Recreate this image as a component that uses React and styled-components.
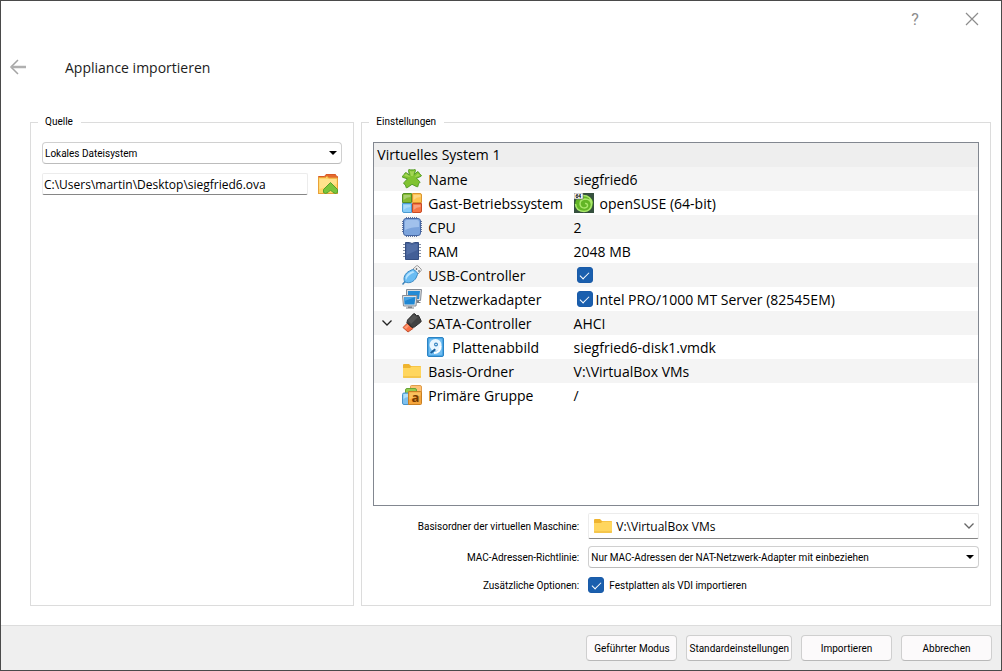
import { useState } from "react";
import styled, { createGlobalStyle } from "styled-components";

const GlobalStyle = createGlobalStyle`
  * {
    box-sizing: border-box;
  }

  body {
    margin: 0;
    background: #4a4a4a;
    color: #000;
    font-family: Roboto, "Open Sans", sans-serif;
    font-size: 10px;
  }

  button,
  input,
  select {
    margin: 0;
    color: inherit;
    font: inherit;
  }
`;

const readingFont = `"Open Sans", "Noto Sans", sans-serif`;

const Dialog = styled.div`
  display: flex;
  flex-direction: column;
  min-height: 100vh;
  border: 1px solid #4a4a4a;
  background: #fff;
`;

const TitleBar = styled.header`
  display: flex;
  justify-content: flex-end;
  gap: 27px;
  height: 38px;
  padding: 4px 14px 4px 0;
`;

const PlainButton = styled.button`
  display: flex;
  align-items: center;
  justify-content: center;
  width: 30px;
  height: 28px;
  padding: 0;
  border: none;
  background: none;
  color: #8c8c8c;
  font-size: 16px;
`;

const PageHead = styled.div`
  display: flex;
  align-items: center;
  gap: 32px;
  height: 56px;
  padding-left: 2px;
`;

const Title = styled.h1`
  margin: 0;
  color: #1c1c1c;
  font-family: ${readingFont};
  font-size: 14px;
  font-weight: 400;
`;

const Content = styled.main`
  display: grid;
  flex: 1;
  grid-template-columns: 34fr 66fr;
  gap: 7px;
  padding: 18px 10px 19px 29px;
`;

const Group = styled.fieldset`
  display: flex;
  flex-direction: column;
  min-width: 0;
  margin: 0;
  padding: 11px 11px 10px;
  border: 1px solid #dcdcdc;
`;

const Legend = styled.legend`
  margin-left: -4px;
  padding: 0 8px 0 7px;
  line-height: 18px;
`;

const FileRow = styled.div`
  display: flex;
  align-items: center;
  gap: 10px;
  margin-top: 9px;
  padding-right: 4px;
`;

const PathInput = styled.input`
  flex: 1;
  min-width: 0;
  height: 22px;
  padding: 0 1px;
  border: 1px solid #ececec;
  border-bottom-color: #868686;
  border-radius: 2px;
  background: #fff;
  outline: none;
  font-family: ${readingFont};
  font-size: 12px;
`;

const IconButton = styled(PlainButton)`
  width: 20px;
  height: 22px;
`;

const ComboBox = styled.div`
  position: relative;
  display: flex;
`;

const Select = styled.select`
  width: 100%;
  height: ${(props) => (props.$flat ? "26px" : "22px")};
  padding: 0 24px 0 ${(props) => (props.$flat ? "27px" : "2px")};
  appearance: none;
  border: 1px solid ${(props) => (props.$flat ? "#ececec" : "#d0d0d0")};
  border-bottom-color: ${(props) => (props.$flat ? "#868686" : "#bcbcbc")};
  border-radius: ${(props) => (props.$flat ? "2px" : "4px")};
  background: #fff;
  outline: none;
  font-family: ${(props) => (props.$flat ? readingFont : "inherit")};
  font-size: ${(props) => (props.$flat ? "12px" : "10px")};
`;

const ComboIcon = styled.span`
  position: absolute;
  top: 0;
  bottom: 0;
  left: 5px;
  display: flex;
  align-items: center;
  pointer-events: none;
`;

const ComboArrow = styled(ComboIcon)`
  right: 5px;
  left: auto;
`;

const TreeFrame = styled.div`
  flex: 1;
  border: 1px solid #828790;
  background: #fff;
`;

const Tree = styled.table`
  width: 100%;
  border-collapse: collapse;
  table-layout: fixed;
  font-family: ${readingFont};
  font-size: 14px;
`;

const NameColumn = styled.col`
  width: 33%;
`;

const TreeRow = styled.tr`
  height: 24px;
  background: ${(props) => (props.$shaded ? "#f4f4f4" : "#fff")};
`;

const SystemHead = styled.th`
  padding: 0 3px;
  background: #eee;
  font-weight: 400;
  line-height: 24px;
  text-align: left;
`;

const NameCell = styled.th`
  padding: 0;
  font-weight: 400;
`;

const ValueCell = styled.td`
  padding: 0;
`;

const CellContent = styled.div`
  display: flex;
  align-items: center;
  gap: 6px;
  height: 24px;
  padding-left: ${(props) => props.$indent || 0}px;
  white-space: nowrap;

  svg {
    flex: none;
  }
`;

const ExpandButton = styled(PlainButton)`
  width: 18px;
  height: 18px;
`;

const CheckLabel = styled.label`
  display: flex;
  align-items: center;
  gap: ${(props) => props.$gap}px;
`;

const CheckBox = styled.input`
  display: flex;
  flex: none;
  align-items: center;
  justify-content: center;
  width: 16px;
  height: 16px;
  appearance: none;
  border: 1px solid ${(props) => (props.checked ? "#1a5ba8" : "#868686")};
  border-radius: 3px;
  background: ${(props) => (props.checked ? "#1a5fae" : "#fff")};

  &:checked::after {
    content: "";
    width: 8px;
    height: 4px;
    margin-bottom: 2px;
    border-bottom: 1px solid #fff;
    border-left: 1px solid #fff;
    transform: rotate(-45deg);
  }
`;

const Options = styled.div`
  display: grid;
  grid-template-columns: 34% 1fr;
  align-items: center;
  gap: 7px 9px;
  margin-top: 7px;
`;

const OptionLabel = styled.label`
  text-align: right;
  white-space: nowrap;
`;

const OptionCheck = styled.div`
  display: flex;
  align-items: center;
  height: 20px;
`;

const Footer = styled.footer`
  display: flex;
  justify-content: flex-end;
  gap: 9px;
  padding: 9px 9px 9px 0;
  border-top: 1px solid #dcdcdc;
  background: #efefef;
`;

const Button = styled.button`
  min-width: 91px;
  height: 26px;
  padding: 0 2px;
  border: 1px solid #cfcfcf;
  border-bottom-color: #b9b9b9;
  border-radius: 4px;
  background: #fcfafb;
  white-space: nowrap;
`;

function Icon({ children }) {
  return (
    <svg width="20" height="20" viewBox="0 0 20 20" aria-hidden="true">
      {children}
    </svg>
  );
}

function NameIcon() {
  return (
    <Icon>
      <path
        d="M6.500 1.300q0-.8.8-.8l1.400.4h2.600l1.400-.4q.8 0 .8.800L12.300 5.500l3-2.700q.8-.5 1.200.2l.7 1.300 1.100 1 .9.900q.6.800-.4 1.200L14.500 9.200l3.200 3.500q.6.700-.1 1.200l-1 .5-.4 1.600-.3 1.400q-.3.800-1.100.3L10 15.300l-4.800 3.400q-.8.500-1.100-.3l-.3-1.400-.8-1.600-1-.5q-.7-.5-.1-1.200L5.500 9.800.8 8.400q-1-.4-.4-1.200l.9-.9 1.100-1 .7-1.300q.4-.7 1.200-.2l3 2.200z"
        fill="#80c331"
        stroke="#559c27"
        strokeLinejoin="round"
      />
      <path d="M7.700 2q2.300.8 4.600 0L11 7H9zM2 7l2-2.500L8.500 8zM16 4.500L18 7l-5.500 1z" fill="#a3d654" />
    </Icon>
  );
}

function OsIcon() {
  return (
    <Icon>
      <path d="M.5 2Q.5.5 2 .5h7.500v9h-9z" fill="#84ba31" stroke="#548f25" />
      <path d="M10.500.5H18q1.500 0 1.500 1.500v7.500h-9z" fill="#ffc450" stroke="#dc9630" />
      <path d="M.5 10.500h9v9H2Q.5 19.500.5 18z" fill="#86cbf7" stroke="#4b9bd0" />
      <path d="M10.500 10.500h9V18q0 1.500-1.500 1.500h-7.500z" fill="#f57545" stroke="#c94b25" />
      <path d="M1.500 2h7v2q-4 0-7 3zM11.500 2h7v2q-4 0-7 3zM1.500 12h7v2q-4 0-7 3zM11.500 12h7v2q-4 0-7 3z" fill="#fff" opacity=".3" />
    </Icon>
  );
}

function CpuIcon() {
  return (
    <Icon>
      <path
        d="M4.500 0v20M6.500 0v20M8.500 0v20M10.500 0v20M12.500 0v20M14.500 0v20M0 4.500h20M0 6.500h20M0 8.500h20M0 10.500h20M0 12.500h20M0 14.500h20"
        stroke="#62769f"
      />
      <rect x="1.500" y="1.500" width="17" height="17" rx="2.500" fill="#7ba3dc" stroke="#4566a2" />
      <path d="M3 5q0-2 2-2h10q2 0 2 2v5q-8 0-14 3z" fill="#a1c1ec" />
    </Icon>
  );
}

function RamIcon() {
  return (
    <Icon>
      <path d="M1 3.500h18M1 6.500h18M1 9.500h18M1 12.500h18M1 15.500h18" stroke="#848fa5" />
      <path d="M3.500 1.500h4q2.500 2 5 0h4v17h-13z" fill="#435f97" stroke="#344d80" />
      <path d="M4.500 3h3q2.500 1.500 5 0h3v6l-11 5z" fill="#536fa6" />
    </Icon>
  );
}

function UsbIcon() {
  return (
    <Icon>
      <path d="M11 4l3.500-3.200q.8-.5 1.500.2l3 3q.7.7.2 1.500L16 9z" fill="#f1f1f1" stroke="#999" />
      <path d="M14 3.500l1 1M16.500 5.500l1 1" stroke="#555" strokeWidth="1.500" />
      <path d="M.5 19.500L3.500 16" stroke="#3c82b8" strokeWidth="1.500" />
      <path
        d="M3 17C.5 13.500 3 8 7.500 6l3-1.500q1-.3 2 .5L15 7.500q.8 1 .5 2L14 13c-2 3.500-6.500 6-11 4z"
        fill="#69bcf3"
        stroke="#3989c4"
      />
      <path d="M3.500 13C4 9.500 7.500 6.800 11 6l1.500 1.500C9 8.500 6 10.500 4 15z" fill="#b5e3ff" />
    </Icon>
  );
}

function NetworkIcon() {
  return (
    <Icon>
      <path d="M4.500.5h15l-1 11h-14z" fill="#d9dde1" stroke="#858b94" />
      <path d="M6 2h12l-1 8H6z" fill="#258bd5" />
      <path d="M15 12h2v1h1.500v1H14z" fill="#7c8289" />
      <path d="M.5 6.500h14.500l-1 10.500H1.500z" fill="#e0e4e7" stroke="#858b94" />
      <path d="M2 8h11.500l-1 7.500h-10z" fill="#1f87d3" />
      <path d="M2 8h11.500L2.500 12z" fill="#4ba4e4" />
      <path d="M6 17.500h4v1h2v1H4v-1h2z" fill="#7c8289" />
    </Icon>
  );
}

function SataIcon() {
  return (
    <Icon>
      <path d="M1 14.500L5.500 10l5.500 5.500-5 3.500z" fill="#fa6f43" stroke="#c15432" strokeLinejoin="round" />
      <path d="M2 14.500l3.500-3 1.500 1.500-3 3z" fill="#ff9b75" />
      <path
        d="M5.500 7L11.500.8q.7-.5 1.500.2l1.500 1.500h2l2.500 5q.5 1-.3 1.700L12.500 14l-2.500.5-5-5z"
        fill="#414141"
        stroke="#303030"
      />
      <path d="M6 7.500l6-6 2 2 2 .5-7 7z" fill="#555" />
      <path d="M5 9.500l5 5" stroke="#222" />
    </Icon>
  );
}

function DiskIcon() {
  return (
    <Icon>
      <rect x="1.500" y=".5" width="16" height="19" rx="1.500" fill="#4aa6e5" stroke="#2b83c4" />
      <rect x="3" y="2" width="13" height="16" rx="1" fill="#72bdf0" />
      <circle cx="9.500" cy="8" r="6" fill="#e9f6ff" />
      <circle cx="10" cy="7.500" r="2" fill="#3684c1" />
      <circle cx="10" cy="7.500" r=".8" fill="#fff" />
      <path d="M14.500 9c.5 4-2.500 7-6.500 7" stroke="#fff" strokeWidth="2" fill="none" />
      <path d="M4 15.500l4.500-4 1.500 1.500-4.500 3.500z" fill="#195d98" />
    </Icon>
  );
}

function FolderIcon() {
  return (
    <Icon>
      <path d="M1 4q0-1 1-1h5l2 2h9q1 0 1 1v4H1z" fill="#efb42f" />
      <path d="M1 7h7l1.500-1.500H18q1 0 1 1V16q0 1-1 1H2q-1 0-1-1z" fill="#ffd65e" />
      <path d="M1 15h18v1q0 1-1 1H2q-1 0-1-1z" fill="#f5c64c" />
    </Icon>
  );
}

function GroupIcon() {
  return (
    <Icon>
      <path d="M8.500 1.500q0-1 1-1h8.500q1.500 0 1.500 1.500v7h-11z" fill="#ffc275" stroke="#df9c4b" />
      <path d="M3.500 5q0-1.500 1.500-1.500h8q1.500 0 1.500 1.500v7h-11z" fill="#95cc4c" stroke="#68a438" />
      <path d="M.5 9.500Q.5 8 2 8h6v11.500H2Q.5 19.500.5 18z" fill="#7dc0ee" stroke="#4692c9" />
      <path d="M1.500 9h5v3q-3 0-5 2z" fill="#b0def8" />
      <path d="M6.500 6.500h12q1 0 1 1v11q0 1-1 1h-12z" fill="#f5a53c" stroke="#c88024" />
      <path d="M7.500 7.500h11v3q-6 1-11 4z" fill="#fbc15f" />
      <text x="9.500" y="17" fill="#763a00" fontSize="13" fontWeight="700">a</text>
    </Icon>
  );
}

function SuseIcon() {
  return (
    <Icon>
      <path d="M0 0h20v20H0z" fill="#35503e" />
      <path d="M1 12q0-9 9-9 8 0 9 6 0 9-8 10-9 0-10-7z" fill="#62b526" />
      <path
        d="M1.500 11q.5 7 8.500 7.500 7-.5 7.500-7Q17 6 11 6q-5 .5-5 5 .5 4 4.500 4 3.500-.5 3-3-.5-2-2.500-1.500M9 2.500q8 0 9 8"
        fill="none"
        stroke="#a9e76b"
        strokeWidth="1.500"
      />
      <path d="M0 0h9v6H0z" fill="#fff" stroke="#666" strokeWidth=".6" />
      <text x="1.500" y="4.800" fontSize="5" fontWeight="700">64</text>
    </Icon>
  );
}

function OpenFolderIcon() {
  return (
    <Icon>
      <path d="M.5 2.500h6l1.500-2h9.500l1 2h1v17H.5z" fill="#e4692e" stroke="#d95a26" />
      <path d="M.5 3.500h7l1.500-1.500 1.500 2h9v15.500H.5z" fill="#ffd468" stroke="#e9a238" />
      <path d="M1.500 5h17v5L1.500 15z" fill="#ffe28c" />
      <path
        d="M5.500 15.500L12.500 8.500l7 7v3l-2 1-2.500-1-2.500-2.500L10 18.500l-2.500 1-2-1z"
        fill="#78c43a"
        stroke="#54a02b"
        strokeLinejoin="round"
      />
    </Icon>
  );
}

function BackIcon() {
  return (
    <svg width="18" height="16" viewBox="0 0 18 16" aria-hidden="true">
      <path d="M9 1L2 8l7 7" fill="none" stroke="#a4a4a4" strokeWidth="1.500" />
      <path d="M2 8h15" stroke="#b0b0b0" strokeWidth="2.500" />
    </svg>
  );
}

function CloseIcon() {
  return (
    <svg width="14" height="14" viewBox="0 0 14 14" aria-hidden="true">
      <path d="M1 1l12 12M13 1L1 13" stroke="#8c8c8c" strokeWidth="1.200" />
    </svg>
  );
}

function Chevron({ color }) {
  return (
    <svg width="10" height="6" viewBox="0 0 10 6" aria-hidden="true">
      <path d="M.5.5L5 5 9.500.5" fill="none" stroke={color} strokeWidth="1.300" />
    </svg>
  );
}

function Triangle() {
  return (
    <svg width="8" height="4" viewBox="0 0 8 4" aria-hidden="true">
      <path d="M0 0h8L4 4z" />
    </svg>
  );
}

const settings = [
  { name: "Name", icon: NameIcon, value: "siegfried6" },
  { name: "Gast-Betriebssystem", icon: OsIcon, value: "openSUSE (64-bit)", valueIcon: SuseIcon },
  { name: "CPU", icon: CpuIcon, value: "2" },
  { name: "RAM", icon: RamIcon, value: "2048 MB" },
  { name: "USB-Controller", icon: UsbIcon, value: "", checkable: true },
  { name: "Netzwerkadapter", icon: NetworkIcon, value: "Intel PRO/1000 MT Server (82545EM)", checkable: true },
  { name: "SATA-Controller", icon: SataIcon, value: "AHCI", expandable: true },
  { name: "Plattenabbild", icon: DiskIcon, value: "siegfried6-disk1.vmdk", child: true },
  { name: "Basis-Ordner", icon: FolderIcon, value: "V:\\VirtualBox VMs" },
  { name: "Primäre Gruppe", icon: GroupIcon, value: "/" },
];

function Check({ label, text, gap }) {
  const [checked, setChecked] = useState(true);

  return (
    <CheckLabel $gap={gap}>
      <CheckBox
        type="checkbox"
        aria-label={label}
        checked={checked}
        onChange={() => setChecked(!checked)}
      />
      {text}
    </CheckLabel>
  );
}

function Setting({ setting, shaded, expanded, onToggle }) {
  const { name, icon: NameSymbol, valueIcon: ValueSymbol, value } = setting;
  const indent = setting.expandable ? 4 : setting.child ? 52 : 28;

  return (
    <TreeRow $shaded={shaded}>
      <NameCell scope="row">
        <CellContent $indent={indent}>
          {setting.expandable && (
            <ExpandButton
              type="button"
              aria-label={name}
              aria-expanded={expanded}
              onClick={onToggle}
            >
              <Chevron color="#222" />
            </ExpandButton>
          )}
          <NameSymbol />
          {name}
        </CellContent>
      </NameCell>
      <ValueCell>
        <CellContent $indent={setting.checkable ? 3 : 0}>
          {ValueSymbol && <ValueSymbol />}
          {setting.checkable ? (
            <Check label={name} text={value} gap={3} />
          ) : (
            value
          )}
        </CellContent>
      </ValueCell>
    </TreeRow>
  );
}

export default function App() {
  const [path, setPath] = useState("C:\\Users\\martin\\Desktop\\siegfried6.ova");
  const [expanded, setExpanded] = useState(true);
  const rows = settings.filter((setting) => expanded || !setting.child);

  return (
    <>
      <GlobalStyle />
      <Dialog>
        <TitleBar>
          <PlainButton type="button">?</PlainButton>
          <PlainButton type="button" aria-label="Schließen">
            <CloseIcon />
          </PlainButton>
        </TitleBar>
        <PageHead>
          <PlainButton type="button" aria-label="Zurück">
            <BackIcon />
          </PlainButton>
          <Title>Appliance importieren</Title>
        </PageHead>
        <Content>
          <Group>
            <Legend>Quelle</Legend>
            <ComboBox>
              <Select aria-label="Quelle">
                <option>Lokales Dateisystem</option>
              </Select>
              <ComboArrow>
                <Triangle />
              </ComboArrow>
            </ComboBox>
            <FileRow>
              <PathInput
                type="text"
                aria-label="Datei"
                value={path}
                onChange={(event) => setPath(event.target.value)}
              />
              <IconButton type="button" aria-label="Datei auswählen">
                <OpenFolderIcon />
              </IconButton>
            </FileRow>
          </Group>
          <Group>
            <Legend>Einstellungen</Legend>
            <TreeFrame>
              <Tree>
                <colgroup>
                  <NameColumn />
                  <col />
                </colgroup>
                <thead>
                  <TreeRow>
                    <SystemHead colSpan={2}>Virtuelles System 1</SystemHead>
                  </TreeRow>
                </thead>
                <tbody>
                  {rows.map((setting, index) => (
                    <Setting
                      key={setting.name}
                      setting={setting}
                      shaded={index % 2 === 0}
                      expanded={expanded}
                      onToggle={() => setExpanded(!expanded)}
                    />
                  ))}
                </tbody>
              </Tree>
            </TreeFrame>
            <Options>
              <OptionLabel htmlFor="folder">
                Basisordner der virtuellen Maschine:
              </OptionLabel>
              <ComboBox>
                <Select id="folder" $flat>
                  <option>V:\VirtualBox VMs</option>
                </Select>
                <ComboIcon>
                  <FolderIcon />
                </ComboIcon>
                <ComboArrow>
                  <Chevron color="#666" />
                </ComboArrow>
              </ComboBox>
              <OptionLabel htmlFor="mac">MAC-Adressen-Richtlinie:</OptionLabel>
              <ComboBox>
                <Select id="mac">
                  <option>
                    Nur MAC-Adressen der NAT-Netzwerk-Adapter mit einbeziehen
                  </option>
                </Select>
                <ComboArrow>
                  <Triangle />
                </ComboArrow>
              </ComboBox>
              <OptionLabel as="span">Zusätzliche Optionen:</OptionLabel>
              <OptionCheck>
                <Check text="Festplatten als VDI importieren" gap={5} />
              </OptionCheck>
            </Options>
          </Group>
        </Content>
        <Footer>
          <Button type="button">Geführter Modus</Button>
          <Button type="button">Standardeinstellungen</Button>
          <Button type="button">Importieren</Button>
          <Button type="button">Abbrechen</Button>
        </Footer>
      </Dialog>
    </>
  );
}
